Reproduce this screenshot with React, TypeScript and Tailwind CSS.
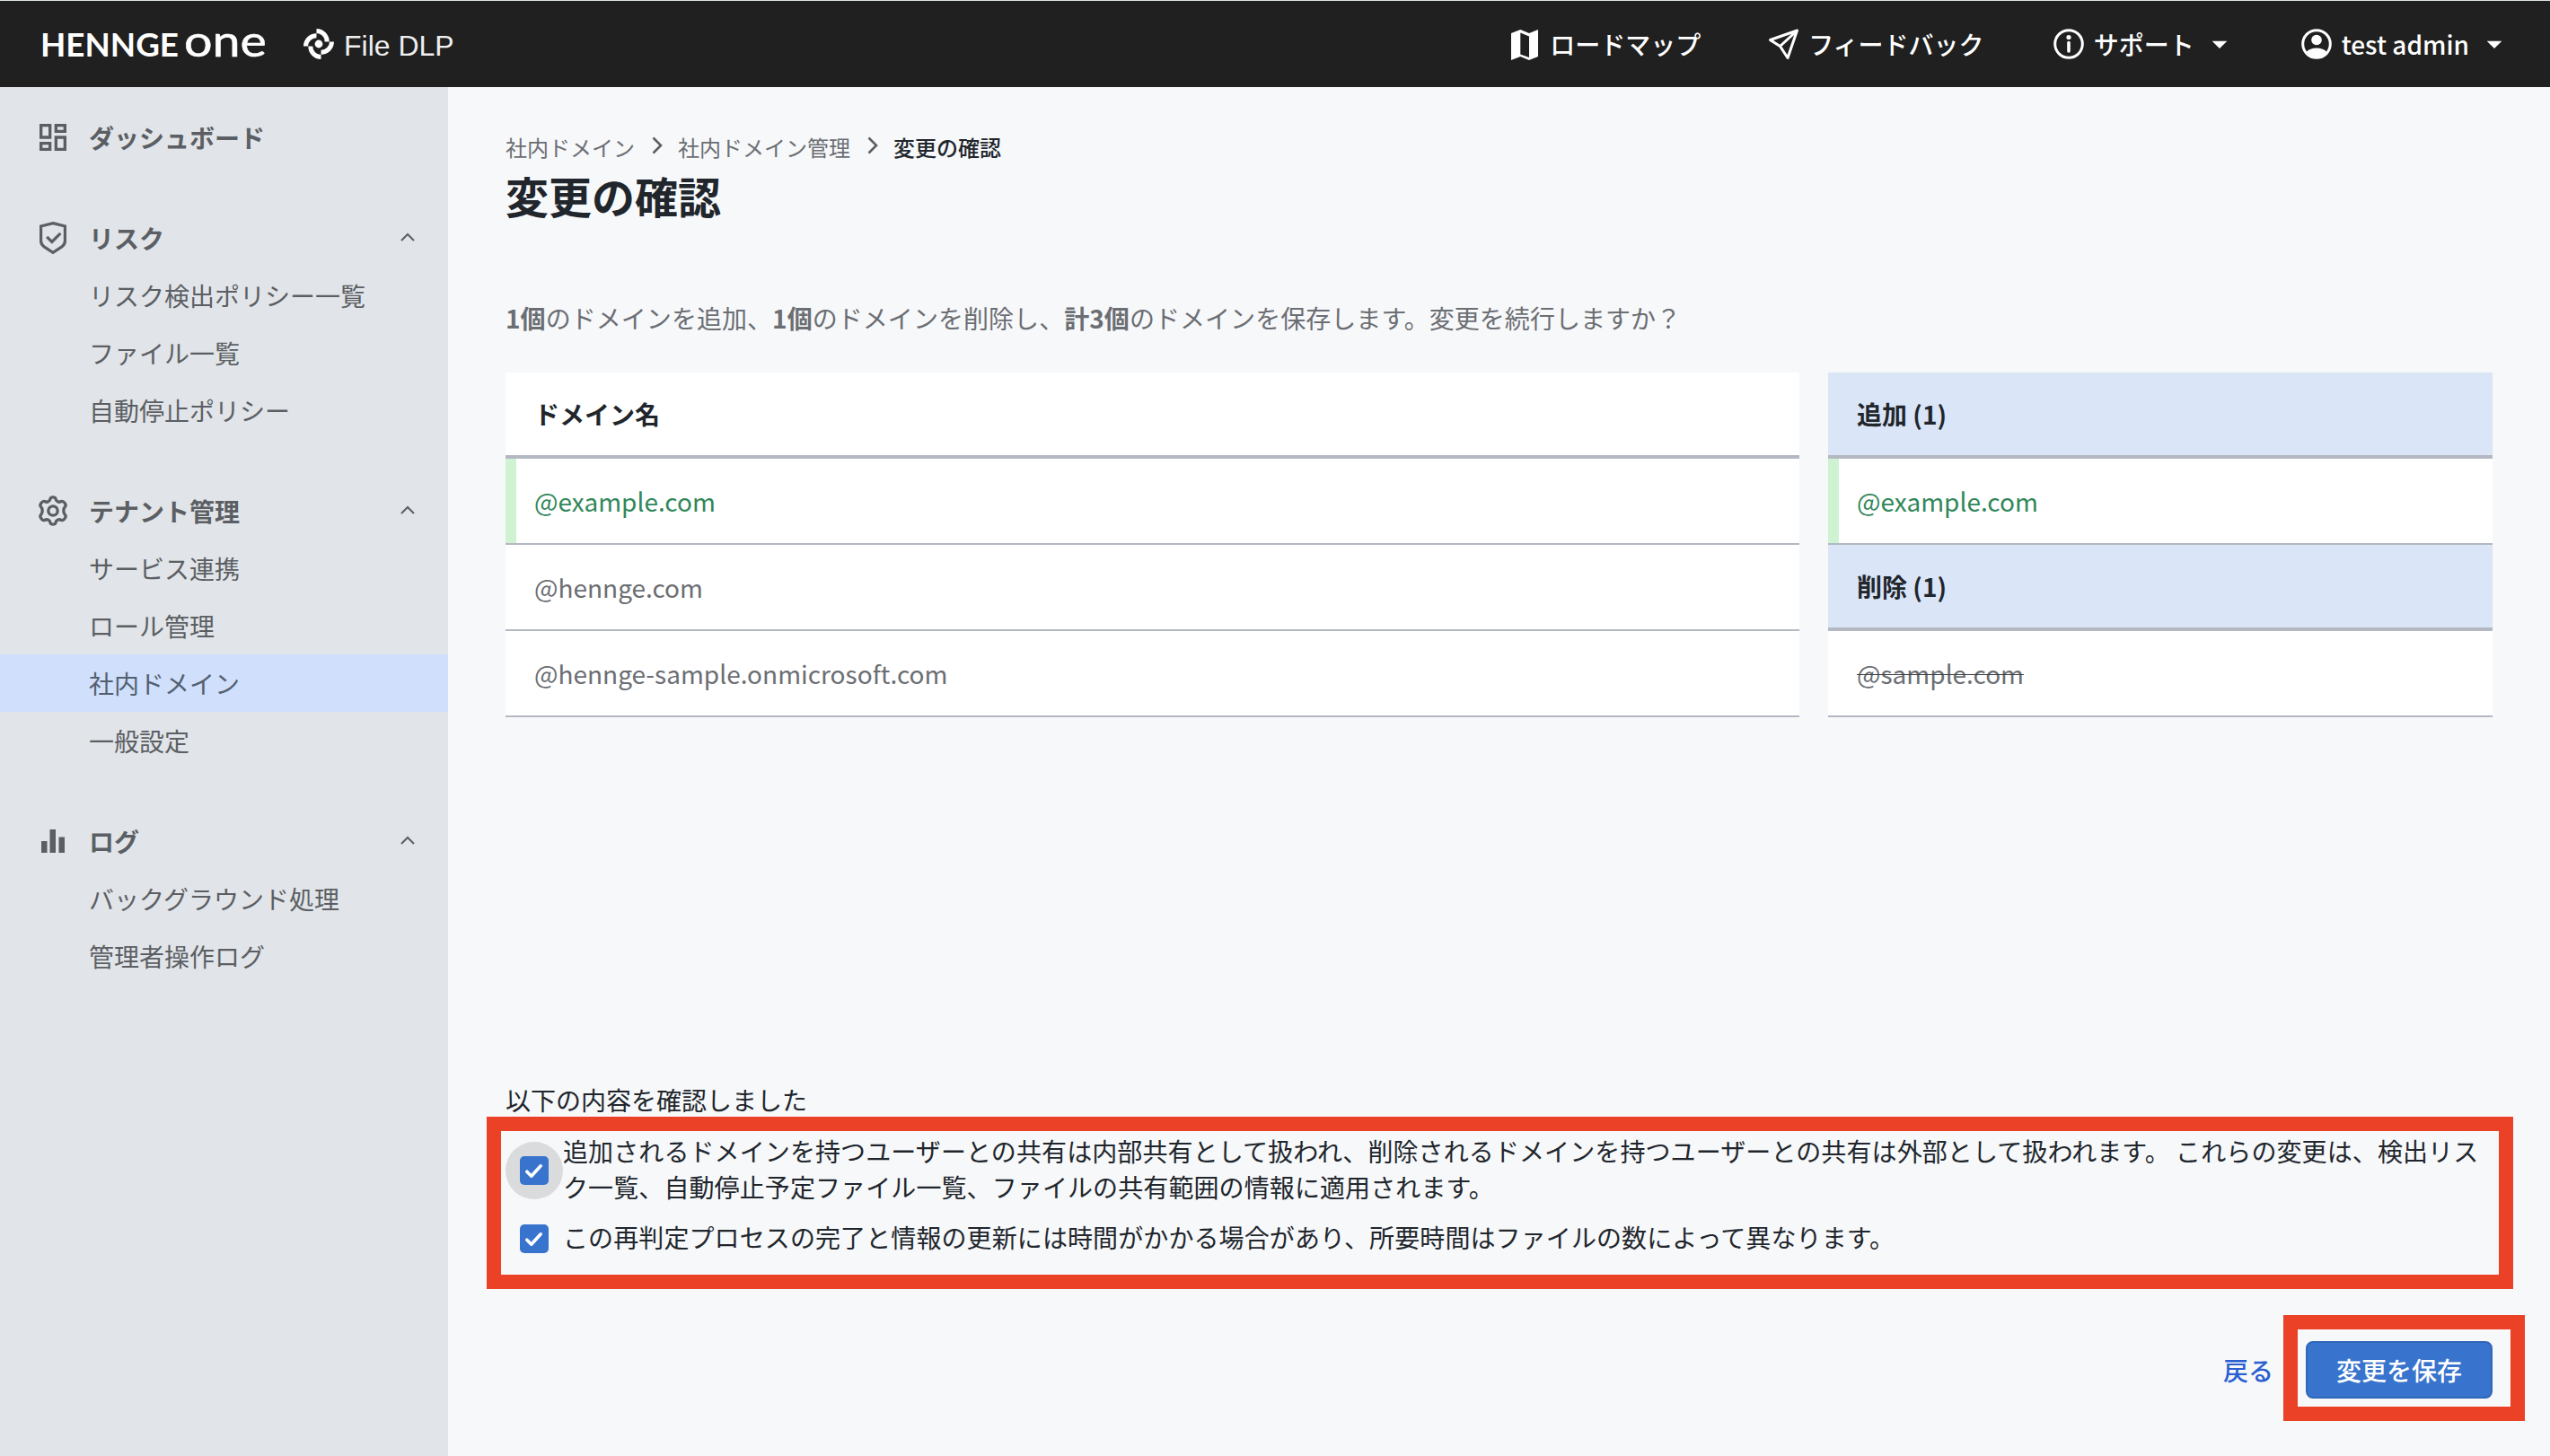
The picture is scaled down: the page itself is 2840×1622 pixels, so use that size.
import React from "react";
import { MdArrowDropDown, MdOutlineDashboard } from "react-icons/md";

type IconProps = { className?: string };

function HenngeLogo() {
  return (
    <svg viewBox="0 0 256 90" className="w-[256px] h-[90px] overflow-visible" fill="#fff">
      <text x="-1" y="59" fontFamily="Lato, sans-serif" fontWeight="700" fontSize="36" textLength="154" lengthAdjust="spacingAndGlyphs">
        HENNGE
      </text>
      <text x="159" y="59" fontFamily="Lato, sans-serif" fontWeight="400" fontSize="48" textLength="92" lengthAdjust="spacingAndGlyphs" stroke="#fff" strokeWidth="0.5">
        one
      </text>
    </svg>
  );
}

function DlpLogo() {
  return (
    <svg viewBox="0 0 40 40" className="size-10" fill="none" stroke="#fff" strokeWidth="5">
      {[0, 90, 180, 270].map((deg) => (
        <path key={deg} d="M17.5 5.5A11.8 11.8 0 0 1 29.2 17.5" transform={`rotate(${deg} 20 20)`} />
      ))}
      <circle cx="20" cy="20" r="4.4" fill="#fff" stroke="none" />
    </svg>
  );
}

function MapIcon() {
  return (
    <svg viewBox="0 0 40 40" className="size-10" fill="#fff" fillRule="evenodd">
      <path d="M5 8 15.300 4 25 8 35 4V34L25 38 15.300 34 5 38ZM15.300 7.500V31.500L25 35V11.500Z" />
    </svg>
  );
}

function SendIcon() {
  return (
    <svg viewBox="0 0 40 40" className="size-10" fill="none" stroke="#fff" strokeWidth="3" strokeLinejoin="round">
      <path d="M35.500 5 5.500 15.500 16.500 22.500 25 35.500Z M35.500 5 16.500 22.500" />
    </svg>
  );
}

function InfoIcon() {
  return (
    <svg viewBox="0 0 40 40" className="size-10" fill="none" stroke="#fff">
      <circle cx="20" cy="20" r="15.300" strokeWidth="3" />
      <circle cx="20" cy="12.500" r="2.600" fill="#fff" stroke="none" />
      <path d="M20 18.500V28" strokeWidth="3.600" strokeLinecap="round" />
    </svg>
  );
}

function AccountIcon() {
  return (
    <svg viewBox="0 0 40 40" className="size-10" fill="#fff">
      <circle cx="20" cy="20" r="15.300" fill="none" stroke="#fff" strokeWidth="3" />
      <circle cx="20" cy="15.500" r="5.800" />
      <path d="M8.500 29C11 26 15 24.500 20 24.500S29 26 31.500 29C29 33.500 24.500 36 20 36S11 33.500 8.500 29Z" />
    </svg>
  );
}

function ShieldIcon({ className }: IconProps) {
  return (
    <svg viewBox="0 0 40 40" className={className} fill="none" stroke="currentColor" strokeWidth="3.200">
      <path d="M20 3.600 33.400 7V23.500C33.400 26.500 32 28.500 29.500 30.200L20 36.300 10.500 30.200C8 28.500 6.600 26.500 6.600 23.500V7Z" />
      <path d="M13.200 18.800 18.800 24.400 28.400 14.900" />
    </svg>
  );
}

function GearIcon({ className }: IconProps) {
  return (
    <svg viewBox="0 0 24 24" className={className} fill="none" stroke="currentColor" strokeWidth="2" strokeLinejoin="round">
      <path d="M10.300 3.800C10.600 2.600 13.400 2.600 13.700 3.800C14 5.800 15.800 6.700 17.600 5.700C19 5.100 21.200 7.900 20.200 9.100C18.700 10.700 18.700 13.300 20.200 14.900C21.200 16.100 19 18.900 17.600 18.300C15.800 17.300 14 18.200 13.700 20.200C13.400 21.400 10.600 21.400 10.300 20.200C10 18.200 8.200 17.300 6.400 18.300C5 18.900 2.800 16.100 3.800 14.900C5.300 13.300 5.300 10.700 3.800 9.100C2.800 7.900 5 5.100 6.400 5.700C8.200 6.700 10 5.800 10.300 3.800Z" />
      <circle cx="12" cy="12" r="3.100" />
    </svg>
  );
}

function BarsIcon({ className }: IconProps) {
  return (
    <svg viewBox="0 0 40 40" className={className} fill="currentColor">
      <path d="M7 20h6.500v13H7zM16.500 7H23v26h-6.500zM26.500 15.500H33V33h-6.500z" />
    </svg>
  );
}

function ChevronUp() {
  return (
    <svg viewBox="0 0 16 10" className="w-4 h-2.5 mb-0.5" fill="none" stroke="#5b5f64" strokeWidth="2">
      <path d="M1 9 8 2 15 9" />
    </svg>
  );
}

function Crumb() {
  return (
    <svg viewBox="0 0 12 20" className="w-3 h-5 ml-[19px] mr-[17px] mb-1" fill="none" stroke="#5b5f64" strokeWidth="2.600">
      <path d="M1.500 1.500 10 10 1.500 18.500" />
    </svg>
  );
}

const sections = [
  { title: "ダッシュボード", Icon: MdOutlineDashboard, items: [] },
  { title: "リスク", Icon: ShieldIcon, items: ["リスク検出ポリシー一覧", "ファイル一覧", "自動停止ポリシー"] },
  { title: "テナント管理", Icon: GearIcon, items: ["サービス連携", "ロール管理", "社内ドメイン", "一般設定"] },
  { title: "ログ", Icon: BarsIcon, items: ["バックグラウンド処理", "管理者操作ログ"] },
];

function Header() {
  return (
    <header className="h-[97px] border-t border-[#dde3e0] bg-[#202020] text-white text-[28px] font-medium flex items-center pl-[46px] pr-[42px]">
      <HenngeLogo />
      <div className="flex items-center ml-[33px]">
        <DlpLogo />
        <span className="ml-2 pt-[3px] font-['Liberation_Sans'] font-normal text-[32px] text-[#eeeeee]">File DLP</span>
      </div>
      <nav className="ml-auto flex items-center">
        <a className="flex items-center gap-2">
          <MapIcon />
          ロードマップ
        </a>
        <a className="flex items-center gap-2 ml-[72px]">
          <SendIcon />
          フィードバック
        </a>
        <a className="flex items-center gap-2 ml-[74px]">
          <InfoIcon />
          サポート
          <MdArrowDropDown className="size-10" />
        </a>
        <a className="flex items-center gap-2 ml-[68px]">
          <AccountIcon />
          test admin
          <MdArrowDropDown className="size-10" />
        </a>
      </nav>
    </header>
  );
}

function Sidebar() {
  return (
    <aside className="w-[499px] shrink-0 bg-[#e1e4e8] text-[#5b5f64] pt-6 flex flex-col gap-12">
      {sections.map(({ title, Icon, items }) => (
        <section key={title}>
          <div className="h-16 flex items-center pl-[39px] pr-[37px]">
            <Icon className="size-10" />
            <h2 className="ml-5 text-[28px] font-bold flex-1">{title}</h2>
            {items.length > 0 && <ChevronUp />}
          </div>
          {items.map((item) => (
            <div
              key={item}
              className={
                item === "社内ドメイン"
                  ? "h-16 flex items-center pl-[99px] text-[28px] bg-[#cfdffc] text-[#53606f]"
                  : "h-16 flex items-center pl-[99px] text-[28px]"
              }
            >
              {item}
            </div>
          ))}
        </section>
      ))}
    </aside>
  );
}

function HeadRow({ children, className }: { children: React.ReactNode; className: string }) {
  return (
    <div className={`h-24 border-b-4 border-[#b3b8c2] px-8 flex items-center font-bold text-[#21262c] ${className}`}>
      {children}
    </div>
  );
}

function Row({ children, added }: { children: React.ReactNode; added?: boolean }) {
  return (
    <div className="h-24 border-b-2 border-[#b3b8c2] bg-white flex">
      {added && <div className="w-3 bg-[#cff2d3]" />}
      <div className={added ? "pl-5 flex items-center text-[#31875a]" : "pl-8 flex items-center"}>{children}</div>
    </div>
  );
}

function Check({ focused }: { focused?: boolean }) {
  return (
    <span className={focused ? "size-16 rounded-full bg-[#dadbdc] grid place-items-center shrink-0" : "size-16 grid place-items-center shrink-0"}>
      <svg viewBox="0 0 32 32" className="size-8 rounded-[5px] bg-[#3874cd]" fill="none" stroke="#fff" strokeWidth="3.600" strokeLinecap="round" strokeLinejoin="round">
        <path d="M7.800 17.200 12.800 22.200 23.200 10.800" />
      </svg>
    </span>
  );
}

export default function App() {
  return (
    <div lang="ja" className="w-[2840px] h-[1622px] flex flex-col overflow-hidden bg-[#f7f8fa] font-['Noto_Sans_CJK_JP',sans-serif]">
      <Header />
      <div className="flex flex-1">
        <Sidebar />
        <main className="flex-1 pl-16 pr-16 text-[28px] text-[#6b6e73]">
          <div className="mt-[47px] h-10 flex items-center text-2xl">
            社内ドメイン
            <Crumb />
            社内ドメイン管理
            <Crumb />
            <span className="font-medium text-[#21262c]">変更の確認</span>
          </div>
          <h1 className="h-16 mt-px flex items-center text-5xl font-bold text-[#21262c]">変更の確認</h1>
          <p className="mt-[85px] h-10 leading-10 tracking-[0.050px]">
            <b>1個</b>のドメインを追加、<b>1個</b>のドメインを削除し、<b>計3個</b>のドメインを保存します。変更を続行しますか？
          </p>

          <div className="mt-[41px] flex items-start gap-8">
            <div className="w-[1441px]">
              <HeadRow className="bg-white">ドメイン名</HeadRow>
              <Row added>@example.com</Row>
              <Row>@hennge.com</Row>
              <Row>@hennge-sample.onmicrosoft.com</Row>
            </div>
            <div className="w-[740px]">
              <HeadRow className="bg-[#dae5f7]">追加 (1)</HeadRow>
              <Row added>@example.com</Row>
              <HeadRow className="bg-[#dae5f7]">削除 (1)</HeadRow>
              <Row>
                <span className="line-through decoration-[#3d4045] decoration-1">@sample.com</span>
              </Row>
            </div>
          </div>

          <div className="mt-[406px] leading-10 text-[#21262c]">
            <p>以下の内容を確認しました</p>
            <div className="-ml-[21px] -mr-[23px] -mt-px h-48 border-16 border-[#eb4126] pl-[5px] pr-[7px] pt-1 flex flex-col gap-1 tracking-[0.100px]">
              <label className="flex items-center h-20">
                <Check focused />
                <span className="pb-1">
                  追加されるドメインを持つユーザーとの共有は内部共有として扱われ、削除されるドメインを持つユーザーとの共有は外部として扱われます。 これらの変更は、検出リスク一覧、自動停止予定ファイル一覧、ファイルの共有範囲の情報に適用されます。
                </span>
              </label>
              <label className="flex items-center h-16">
                <Check />
                <span className="pb-1">この再判定プロセスの完了と情報の更新には時間がかかる場合があり、所要時間はファイルの数によって異なります。</span>
              </label>
            </div>
          </div>

          <div className="mt-[29px] -mr-9 flex items-center justify-end font-medium">
            <a className="text-[#2a5fd0] mr-[11px] pt-1">戻る</a>
            <div className="w-[269px] h-[118px] border-16 border-[#eb4126] pl-[9px] pt-[13px]">
              <button className="w-52 h-16 flex items-center justify-center rounded-lg border-2 border-[#3067b8] bg-[#3874cd] text-white">変更を保存</button>
            </div>
          </div>
        </main>
      </div>
    </div>
  );
}
